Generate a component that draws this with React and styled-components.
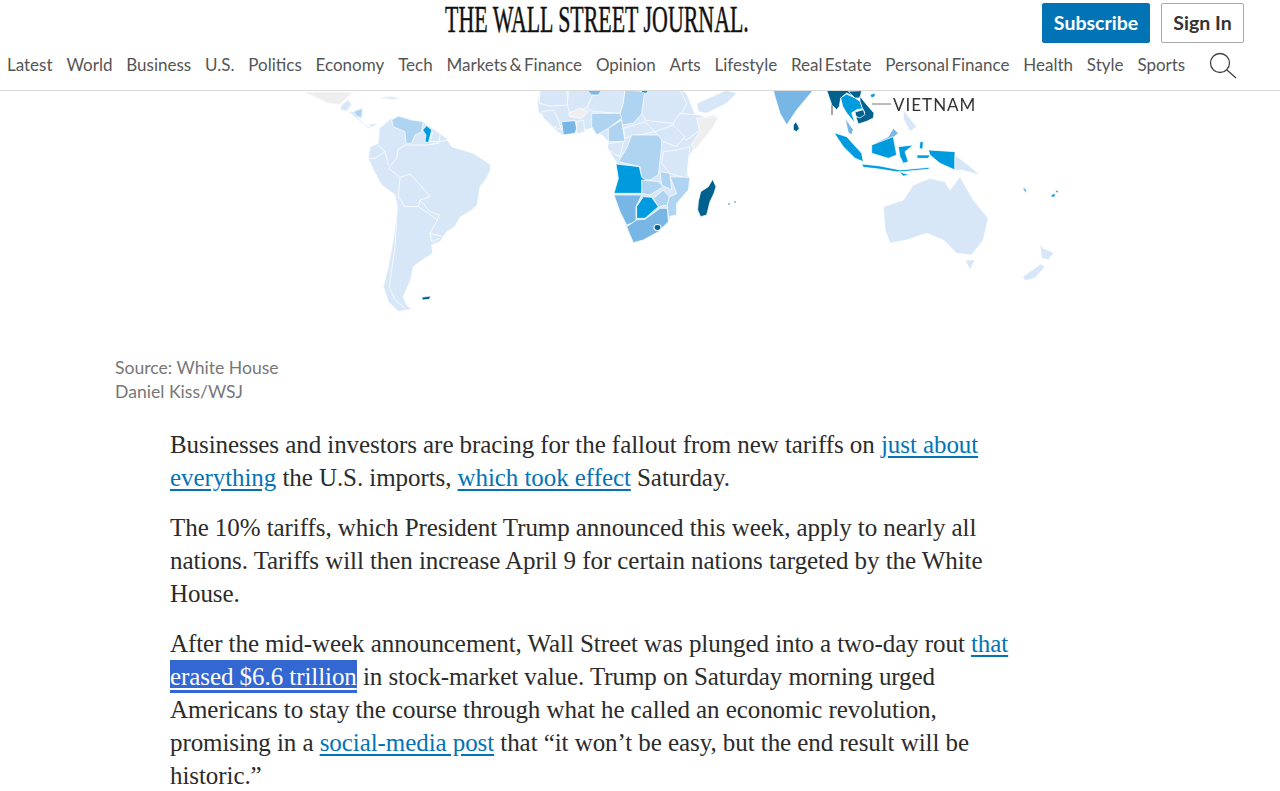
import React from "react";
import styled, { createGlobalStyle } from "styled-components";

const GlobalStyle = createGlobalStyle`
  html, body {
    margin: 0;
    padding: 0;
    background: #fff;
    overflow: hidden;
  }
`;

const Page = styled.div`
  width: 1280px;
  height: 791px;
  overflow: hidden;
  font-family: "Lato", "Liberation Sans", sans-serif;
`;

const Header = styled.header`
  height: 90px;
  border-bottom: 1px solid #d9d9d9;
  box-sizing: content-box;
`;

const TopRow = styled.div`
  height: 45px;
  display: flex;
  align-items: flex-start;
  padding: 3px 36px 0 445px;
  box-sizing: border-box;
`;

const BrandBox = styled.div`
  width: 303px;
  height: 36px;
  overflow: visible;
`;

const Brand = styled.div`
  font-family: "Liberation Serif", serif;
  font-size: 37px;
  line-height: 34px;
  color: #111;
  white-space: nowrap;
  transform: scaleX(0.592);
  transform-origin: left center;
  -webkit-text-stroke: 0.5px #111;
`;

const Actions = styled.div`
  margin-left: auto;
  display: flex;
  gap: 11px;
`;

const Button = styled.a`
  height: 40px;
  box-sizing: border-box;
  padding-bottom: 2px;
  border-radius: 2px;
  display: flex;
  align-items: center;
  justify-content: center;
  font-size: 19.5px;
  font-weight: 700;
  width: ${(p) => (p.$primary ? "108px" : "83px")};
  background: ${(p) => (p.$primary ? "#0274b6" : "#fff")};
  color: ${(p) => (p.$primary ? "#fff" : "#333")};
  border: 1px solid ${(p) => (p.$primary ? "#0274b6" : "#aaa")};
`;

const Nav = styled.nav`
  display: flex;
  align-items: center;
  height: 39px;
  padding-left: 7px;
  gap: 13.85px;
`;

const NavItem = styled.a`
  font-size: 17px;
  word-spacing: -2px;
  color: #555;
  white-space: nowrap;
`;

const SearchButton = styled.span`
  display: flex;
  margin: 2px 0 0 10px;
`;

const MapFigure = styled.figure`
  margin: 0;
`;

const MapSvg = styled.svg`
  display: block;
  width: 1280px;
  height: 255px;
`;

const LandLayer = styled.g`
  filter: blur(0.35px);
`;

const Caption = styled.figcaption`
  margin: 10px 0 0;
  padding-left: 115px;
  font-size: 17.6px;
  line-height: 24px;
  color: #777;
`;

const Article = styled.article`
  width: 845px;
  padding: 24px 0 0 170px;
  font-family: "Liberation Serif", serif;
  font-size: 25px;
  letter-spacing: -0.07px;
  line-height: 33px;
  color: #2b2b2b;
`;

const Paragraph = styled.p`
  margin: 0 0 17px;
`;

const TextLink = styled.a`
  color: #0274b6;
  text-decoration: underline;
  text-underline-offset: 3px;
`;

const SelectedLink = styled.a`
  display: inline-block;
  background: #3367d1;
  color: #fff;
  text-decoration: underline;
  text-underline-offset: 3px;
`;

const light = "#d7e7f7";
const mid = "#aed4f1";
const medium = "#78b6e6";
const strong = "#009ade";
const dark = "#00608e";
const gray = "#eeeeee";

// every list is in the pixel grid of a 3x crop, placed by its region origin
const southAmerica = [
  [light, "160,85 175,77 215,88 250,95 262,105 285,120 320,145 335,170 400,190 450,222 452,240 440,265 420,290 412,345 395,360 360,382 345,410 320,425 300,455 275,465 278,490 240,515 220,530 212,570 190,620 200,645 215,657 175,665 145,635 130,590 145,530 160,450 172,350 165,315 125,285 100,240 85,205 90,170 115,160 118,115 150,88"],
  [mid, "155,90 175,78 215,90 250,95 245,125 225,135 215,160 198,160 195,125 160,110"],
  [strong, "248,120 260,107 275,120 270,140 265,158 255,155 258,135"],
  [dark, "245,622 272,618 268,628 248,630"],
];

const southAmericaBorders = [
  "195,165 175,178 170,205 145,235 180,262 210,252 245,290 270,320 240,330 270,365 298,375 290,395 270,430 310,440",
  "88,205 105,205 135,185 115,165",
  "135,185 145,225",
  "180,262 175,320 195,350 235,350 265,370 295,392",
  "172,350 165,470 148,590 165,630 195,655",
  "270,430 275,455 300,445",
  "278,125 270,155 298,155 325,150",
  "300,135 298,155",
  "195,165 265,165 300,158",
  "240,330 235,350",
];

const centralAmerica = [
  [gray, "40,12 190,12 165,35 150,50 110,45 70,25"],
  [light, "155,50 175,35 185,50 170,70 150,65"],
  [light, "175,70 190,70 205,90 225,110 245,120 235,108 265,105 250,115 235,122 215,105"],
  [mid, "190,70 218,60 215,90 200,85"],
  [light, "260,30 300,25 335,30 310,35"],
];

const africa = [
  [light, "30,0 22,40 25,65 60,105 95,135 130,130 185,115 215,135 235,155 232,175 258,215 265,260 252,310 270,365 295,430 310,458 345,448 390,425 415,395 440,345 480,290 470,220 480,195 500,160 565,85 555,75 500,85 470,10 455,0"],
  [light, "30,0 110,0 115,45 60,48 28,40"],
  [light, "115,0 190,0 190,40 165,55 120,70 112,45"],
  [light, "195,0 285,0 280,40 270,70 190,65 170,55"],
  [mid, "285,0 350,5 345,60 310,100 275,105 270,70 280,40"],
  [light, "345,0 450,0 470,40 450,80 430,100 380,95 345,90 335,70"],
  [light, "430,100 450,70 510,75 540,90 510,120 470,150 430,130"],
  [gray, "500,85 565,80 550,110 495,180 483,165 510,125"],
  [gray, "115,70 150,55 175,65 155,85 120,80"],
  [light, "500,40 590,0 620,10 590,40 530,70 505,65"],
  [light, "35,65 70,60 85,90 95,120 70,110 40,85"],
  [medium, "95,95 135,92 140,115 135,130 100,135"],
  [light, "140,95 160,90 165,125 140,132"],
  [mid, "185,70 270,70 275,85 235,115 200,135 185,110"],
  [mid, "235,115 275,90 285,155 235,155"],
  [light, "280,115 345,95 375,125 300,140 285,145"],
  [light, "235,160 280,155 270,200 250,190 232,175"],
  [mid, "305,135 395,135 395,170 385,255 360,270 335,270 330,230 265,215 290,175"],
  [light, "375,125 430,105 465,140 440,170 400,155"],
  [light, "400,185 440,180 480,170 475,215 470,265 420,250 395,220"],
  [strong, "258,222 328,230 335,262 345,268 335,310 252,310 265,265"],
  [mid, "335,270 385,275 400,290 360,315 335,310"],
  [mid, "390,245 420,250 425,300 395,285"],
  [mid, "420,260 480,262 475,300 440,340 440,375 415,380 410,325 440,310"],
  [mid, "370,325 400,300 418,320 412,345 385,350"],
  [strong, "340,320 365,322 385,350 345,385 320,385 320,350"],
  [medium, "252,315 335,315 318,350 318,395 290,405 270,365"],
  [medium, "290,410 320,390 345,388 390,355 412,355 415,395 385,425 340,450 310,458 298,430"],
  [dark, "548,268 558,290 552,310 540,335 530,375 512,380 503,360 505,335 512,305 535,290"],
  [medium, "170,0 215,0 205,15 185,15"],
  [strong, "330,0 355,0 350,10 338,8"],
];

const indochina = [
  [dark, "20,6 125,6 120,22 100,25 80,15 62,30 58,55 50,65 35,50"],
  [strong, "62,30 80,18 105,30 120,40 128,62 110,65 95,75 105,105 80,75 68,55"],
  [dark, "85,10 125,8 120,30 105,30"],
  [dark, "120,25 140,50 162,75 160,90 140,100 115,108 108,88 120,85 135,75 128,62 120,40"],
  [dark, "105,72 130,65 135,80 120,90 108,85"],
  [strong, "150,20 165,15 165,25 155,30"],
  [medium, "75,90 100,125 95,140 85,135"],
];

const asia = [
  [medium, "40,0 160,0 110,60 80,105 60,70 45,20"],
  [dark, "100,105 108,95 118,115 110,125 100,120"],
  [light, "430,60 470,110 450,125 430,85"],
  [medium, "345,160 385,140 400,115 415,130 385,155 355,170"],
  [strong, "222,128 260,140 305,190 310,215 285,205 250,170"],
  [strong, "305,222 360,228 420,240 510,232 505,238 415,246 350,236 310,232"],
  [strong, "335,165 400,140 410,195 385,205 335,190"],
  [strong, "415,170 460,165 435,185 445,215 430,220 420,200"],
  [strong, "505,180 585,185 585,240 540,220 510,195"],
  [strong, "470,195 510,195 505,205 472,205"],
  [strong, "480,155 490,155 488,178 478,175"],
  [strong, "415,245 450,255 430,258"],
  [light, "585,195 625,225 660,255 605,240 585,243"],
  [light, "370,350 430,330 460,285 510,265 555,275 570,300 600,260 640,330 685,385 670,450 635,495 590,490 550,450 500,430 440,450 390,460 375,420"],
  [light, "615,510 645,510 630,540"],
  [light, "840,460 850,475 882,488 865,510 845,505"],
  [light, "842,522 855,530 825,565 795,572 788,560"],
  [strong, "873,315 885,310 885,320 875,322"],
  [strong, "885,303 895,300 893,310"],
  [medium, "790,290 800,300 798,310 790,300"],
];

const regions = [
  { origin: "340 90", shapes: southAmerica },
  { origin: "290 88", shapes: centralAmerica },
  { origin: "530 90", shapes: africa },
  { origin: "760 90", shapes: asia },
  { origin: "820 88", shapes: indochina },
];

const navItems = [
  "Latest", "World", "Business", "U.S.", "Politics", "Economy", "Tech",
  "Markets & Finance", "Opinion", "Arts", "Lifestyle", "Real Estate",
  "Personal Finance", "Health", "Style", "Sports",
];

const WorldMap = () => (
  <MapSvg viewBox="0 91 1280 255">
    <LandLayer>
      {regions.map((region) => (
        <g key={region.origin} transform={`translate(${region.origin}) scale(0.3333)`}>
          {region.shapes.map(([fill, points]) => (
            <polygon key={points} points={points} fill={fill} stroke="#fff" strokeWidth="2.2" strokeLinejoin="round" />
          ))}
        </g>
      ))}
      <g transform="translate(340 90) scale(0.3333)" fill="none" stroke="#fff" strokeWidth="2.4">
        {southAmericaBorders.map((points) => (
          <polyline key={points} points={points} />
        ))}
      </g>
      <ellipse cx="657.5" cy="227.5" rx="3.5" ry="3" fill={dark} stroke="#fff" strokeWidth="1.2" />
      <circle cx="729" cy="204" r="1" fill={medium} />
      <circle cx="735" cy="202" r="1" fill={medium} />
    </LandLayer>
    <line x1="872" y1="104" x2="891" y2="104" stroke="#777" strokeWidth="1" />
    <line x1="832" y1="105" x2="832" y2="115" stroke="#888" strokeWidth="1.5" />
    <text x="893" y="111" fontFamily="Lato, sans-serif" fontSize="17" letterSpacing="1" fill="#333">VIETNAM</text>
  </MapSvg>
);

export default function App() {
  return (
    <Page>
      <GlobalStyle />
      <Header>
        <TopRow>
          <BrandBox>
            <Brand>THE WALL STREET JOURNAL.</Brand>
          </BrandBox>
          <Actions>
            <Button $primary>Subscribe</Button>
            <Button>Sign In</Button>
          </Actions>
        </TopRow>
        <Nav>
          {navItems.map((item) => (
            <NavItem key={item}>{item}</NavItem>
          ))}
          <SearchButton>
            <svg width="28" height="27" viewBox="0 0 28 27" fill="none" stroke="#444" strokeWidth="1.3">
              <circle cx="11" cy="11" r="9.5" />
              <line x1="18" y1="18" x2="27" y2="26" />
            </svg>
          </SearchButton>
        </Nav>
      </Header>
      <MapFigure>
        <WorldMap />
        <Caption>
          Source: White House
          <br />
          Daniel Kiss/WSJ
        </Caption>
      </MapFigure>
      <Article>
        <Paragraph>
          Businesses and investors are bracing for the fallout from new tariffs on{" "}
          <TextLink>just about everything</TextLink> the U.S. imports,{" "}
          <TextLink>which took effect</TextLink> Saturday.
        </Paragraph>
        <Paragraph>
          The 10% tariffs, which President Trump announced this week, apply to nearly all
          nations. Tariffs will then increase April 9 for certain nations targeted by the White
          House.
        </Paragraph>
        <Paragraph>
          After the mid-week announcement, Wall Street was plunged into a two-day rout{" "}
          <TextLink>that</TextLink> <SelectedLink>erased $6.6 trillion</SelectedLink> in
          stock-market value. Trump on Saturday morning urged Americans to stay the course
          through what he called an economic revolution, promising in a{" "}
          <TextLink>social-media post</TextLink> that “it won’t be easy, but the end result
          will be historic.”
        </Paragraph>
      </Article>
    </Page>
  );
}
